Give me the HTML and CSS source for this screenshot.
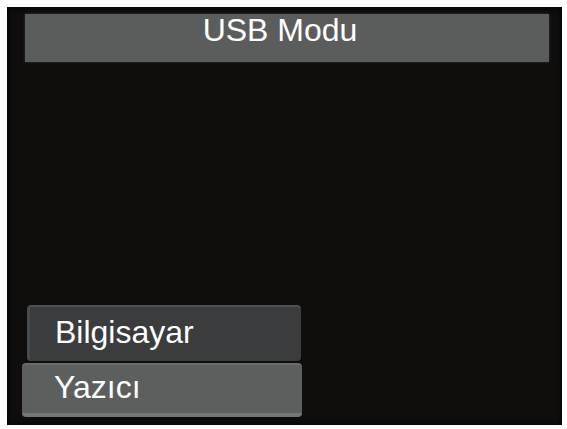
FILE: index.html
```html
<!DOCTYPE html>
<html lang="tr">
<head>
<meta charset="utf-8">
<title>USB Modu</title>
<link rel="stylesheet" href="styles.css">
</head>
<body>
<div class="screen">
  <div class="title-bar">USB Modu</div>
  <div class="menu">
    <div class="item item-dark">Bilgisayar</div>
    <div class="item item-selected">Yazıcı</div>
  </div>
</div>
</body>
</html>
```
FILE: styles.css
```css
html, body {
  margin: 0;
  padding: 0;
  background: #ffffff;
}
body {
  font-family: "Liberation Sans", Arial, sans-serif;
  width: 567px;
  height: 429px;
  overflow: hidden;
}
.screen {
  box-sizing: border-box;
  margin: 7px 0 0 7px;
  width: 555px;
  height: 418px;
  background: #0f0e0d;
  box-shadow: inset 0 0 6px #000;
  display: flex;
  flex-direction: column;
  padding: 7px 13px 8px 15px;
}
.title-bar {
  box-sizing: border-box;
  margin-left: 3px;
  height: 48px;
  background: #5b5d5d;
  color: #ffffff;
  font-size: 32px;
  line-height: 32px;
  padding: 0 14px 0 0;
  text-align: center;
  box-shadow: 0 0 3px #333;
}
.menu {
  margin-top: auto;
  width: 280px;
  display: flex;
  flex-direction: column;
  gap: 2px;
}
.item {
  box-sizing: border-box;
  color: #ffffff;
  font-size: 32px;
  line-height: 32px;
  border-radius: 4px;
}
.item-dark {
  margin-left: 5px;
  margin-right: 1px;
  height: 56px;
  padding: 9px 0 0 25px;
  background: #3b3c3d;
  border-top: 2px solid #4d4f50;
  border-left: 3px solid #4a4b4c;
}
.item-selected {
  height: 54px;
  padding: 6px 0 0 32px;
  background: #5d5f5f;
  border-top: 2px solid #6a6c6c;
  border-bottom: 4px solid #747676;
}
```
